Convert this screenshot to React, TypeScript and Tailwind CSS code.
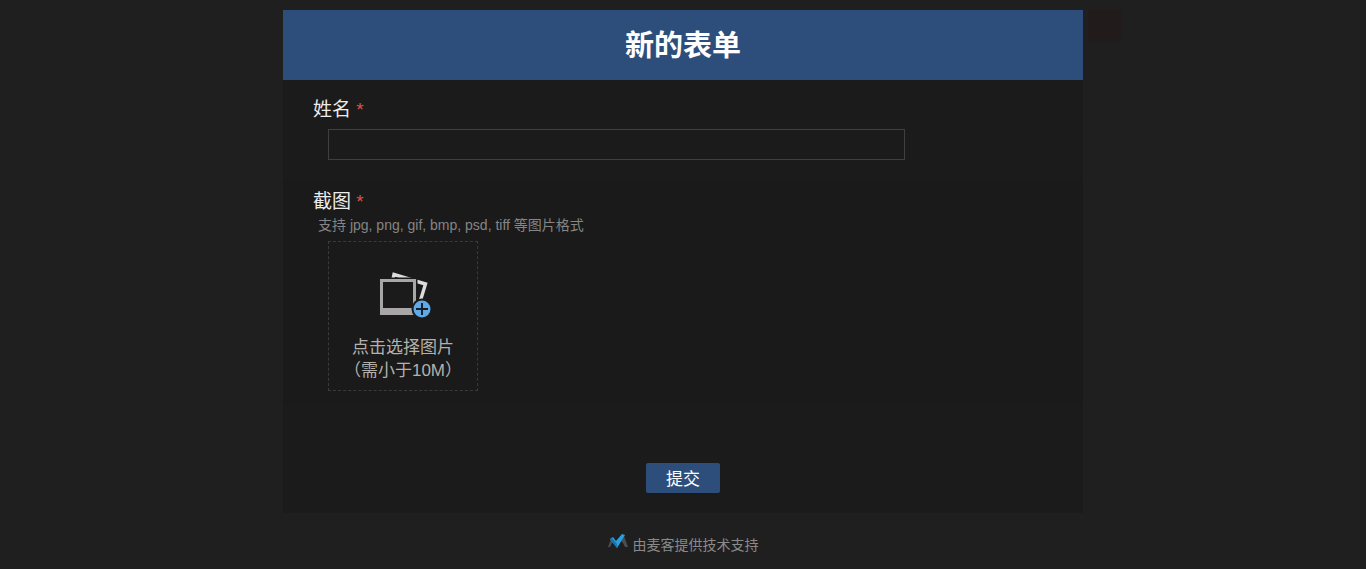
import { useState } from 'react';
import type { ChangeEvent, FormEvent, ReactNode } from 'react';

const PhotoIcon = () => (
  <svg width="56" height="48" viewBox="-4 0 56 48" fill="none" aria-hidden="true">
    <path d="M14 8L15 3.5L46.5 13L41 31" stroke="#dcdcdc" strokeWidth="3.4" />
    <path fill="#1b1b1b" d="M0 6.5h38.5V46H0z" />
    <path fill="#a9a6a7" fillRule="evenodd" d="M1 8h36v36H1zM4 11v26h30V11z" />
    <circle cx="43" cy="38" r="10.5" fill="#1b1b1b" />
    <circle cx="43" cy="38" r="8.5" fill="#5fa9e6" />
    <path d="M37 38h12M43 32v12" stroke="#16202a" strokeWidth="2" />
  </svg>
);

const BrandLogo = () => (
  <svg width="20" height="16" viewBox="0 0 20 16" aria-hidden="true">
    <path fill="#4b4e51" d="M0 14L3 6l4 4-3 0-2 4zM13 8l3-5 4 11h-3l-2-4z" />
    <path fill="#2a9fe0" d="M2 6l3-2 3 4 6-7 3 1-8 13z" />
    <path fill="#1673b4" d="M2 6l2-1 5 6v4z" />
  </svg>
);

const FieldLabel = ({ htmlFor, children }: { htmlFor: string; children: ReactNode }) => (
  <label htmlFor={htmlFor} className="block text-[19px] leading-6 text-[#ececec]">
    {children} <span className="text-[#d9534f]">*</span>
  </label>
);

export default function App() {
  const [name, setName] = useState('');
  const [fileName, setFileName] = useState('');

  const handleFile = (e: ChangeEvent<HTMLInputElement>) => {
    setFileName(e.target.files?.[0]?.name ?? '');
  };

  const handleSubmit = (e: FormEvent) => {
    e.preventDefault();
  };

  return (
    <div className="min-h-screen bg-[#1f1f1f] px-4 pt-2.5 font-['Liberation_Sans','Noto_Sans_CJK_SC',sans-serif]">
      <main className="relative mx-auto max-w-[800px] bg-[#1b1b1b]">
        <header className="flex h-[70px] items-center justify-center bg-[#2d4e7b] pt-0.5">
          <h1 className="text-[29px] leading-9 font-bold text-white">新的表单</h1>
        </header>

        <form onSubmit={handleSubmit}>
          <div className="px-[30px] pt-[18px] pb-5">
            <FieldLabel htmlFor="name">姓名</FieldLabel>
            <input
              id="name"
              type="text"
              value={name}
              onChange={(e) => setName(e.target.value)}
              className="mt-[7px] ml-[15px] block h-[31px] w-[577px] max-w-full border border-[#3f3f3f] bg-transparent px-2 text-base text-[#ececec] outline-none"
            />
          </div>

          <div className="bg-[#1a1a1a] px-[30px] pt-2.5 pb-3">
            <FieldLabel htmlFor="photo">截图</FieldLabel>
            <p className="ml-[5px] text-sm leading-[22px] text-[#858585]">
              支持 jpg, png, gif, bmp, psd, tiff 等图片格式
            </p>
            <label
              htmlFor="photo"
              className="mt-[5px] ml-[15px] flex size-[150px] cursor-pointer flex-col items-center border border-dashed border-[#3a3a3a] pt-[29px] text-center text-[17px] leading-[23px] text-[#b3b1ac]"
            >
              <PhotoIcon />
              <span className="mt-[17px]">{fileName || '点击选择图片'}</span>
              <span className="whitespace-nowrap">（需小于10M）</span>
            </label>
            <input id="photo" type="file" accept="image/*" onChange={handleFile} className="sr-only" />
          </div>

          <div className="flex justify-center pt-[60px] pb-5">
            <button
              type="submit"
              className="h-[30px] w-[74px] cursor-pointer rounded-xs bg-[#2d4e7b] pt-1 text-[17px] leading-[26px] text-white"
            >
              提交
            </button>
          </div>
        </form>

        {/* faint floating tab beside the form */}
        <div className="absolute top-0 left-full ml-[5px] h-8 w-[34px] bg-[#211b1c]" />
      </main>

      <footer className="flex justify-center pt-5">
        <a href="#" className="flex items-start gap-[5px] text-sm leading-6 text-[#8a8a8a]">
          <BrandLogo />
          由麦客提供技术支持
        </a>
      </footer>
    </div>
  );
}
